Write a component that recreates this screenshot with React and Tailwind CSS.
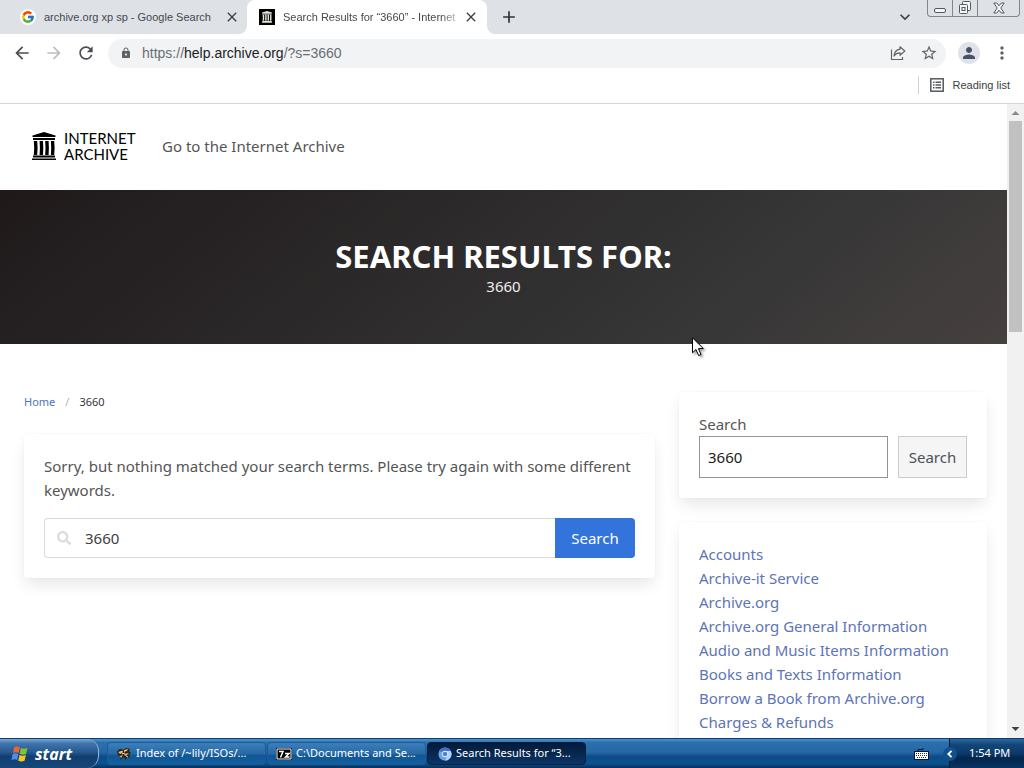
import React from 'react';
import { FcGoogle } from 'react-icons/fc';
import { FaSearch } from 'react-icons/fa';
import {
  MdAdd,
  MdArrowBack,
  MdArrowForward,
  MdClose,
  MdExpandMore,
  MdLock,
  MdMoreVert,
  MdPerson,
  MdRefresh,
  MdStarBorder,
} from 'react-icons/md';

const topics = [
  'Accounts',
  'Archive-it Service',
  'Archive.org',
  'Archive.org General Information',
  'Audio and Music Items Information',
  'Books and Texts Information',
  'Borrow a Book from Archive.org',
  'Charges & Refunds',
];

const cardClass =
  'rounded bg-white p-5 shadow-[0_8px_16px_-2px_rgba(10,10,10,0.1),0_0_0_1px_rgba(10,10,10,0.01)]';

function Temple({ className }) {
  return (
    <svg viewBox="0 0 24 28" className={className} fill="currentColor" aria-hidden="true">
      <path d="M12 0 23.5 3.4V5H.5V3.4ZM1 6h22v2H1ZM0 26.4h24V28H0ZM1 23.6h22v1.8H1Z" />
      <path d="M1.8 9h3.4l.4 7-.4 7H1.8l.4-7ZM7.6 9H11l.3 7-.3 7H7.6l.3-7ZM13.2 9h3.4l.3 7-.3 7h-3.4l.3-7ZM18.9 9h3.3l.4 7-.4 7h-3.3l.3-7Z" />
    </svg>
  );
}

function ShareIcon() {
  return (
    <svg viewBox="0 0 16 16" className="size-4" fill="none" stroke="#5f6368" strokeWidth="1.2" aria-hidden="true">
      <path d="M1.5 4.5v10h11V12" />
      <path d="M10 1.8 14.8 6 10 10.2V7.8C7.3 7.8 5.4 8.8 4 11c.4-3.8 2.5-6.2 6-6.8Z" strokeLinejoin="round" />
    </svg>
  );
}

function ReadingListIcon() {
  return (
    <svg viewBox="0 0 14 14" className="mr-[9px] size-[14px]" fill="none" stroke="#55595e" strokeWidth="1.500" aria-hidden="true">
      <rect x=".8" y=".8" width="12.400" height="12.400" />
      <path d="M3 4.200h1.500M3 7h1.500M3 9.800h1.500M5.500 4.200H11M5.500 7H11M5.500 9.800H11" />
    </svg>
  );
}

function WindowButtons() {
  const stroke = { fill: '#f4f6f8', stroke: '#55585d', strokeWidth: 1 };
  return (
    <div className="flex h-[17px] w-[93px] self-start overflow-hidden rounded-b border border-t-0 border-[#82868c]">
      <button aria-label="Minimize" className="flex w-6 items-end justify-center pb-[3px]">
        <svg viewBox="0 0 13 5" className="h-[5px] w-[13px]" {...stroke} aria-hidden="true">
          <rect x=".5" y=".5" width="11" height="4" rx="1.5" />
        </svg>
      </button>
      <button aria-label="Restore" className="flex w-[26px] items-center justify-center border-x border-[#82868c]">
        <svg viewBox="0 0 14 14" className="size-[14px]" {...stroke} aria-hidden="true">
          <rect x="4.5" y=".5" width="8" height="9" rx="1" />
          <rect x="1.5" y="3.5" width="8" height="9" rx="1" />
          <rect x="4" y="6.5" width="3" height="3" />
        </svg>
      </button>
      <button aria-label="Close" className="flex flex-1 items-center justify-center">
        <svg viewBox="0 0 12 12" className="size-3" {...stroke} aria-hidden="true">
          <path d="M.8 1h3L6 3.8 8.2 1h3L7.8 6l3.4 5h-3L6 8.2 3.8 11h-3l3.4-5Z" />
        </svg>
      </button>
    </div>
  );
}

function TabStrip() {
  return (
    <div className="flex h-[34px] shrink-0 bg-[#dee1e6] text-[11px] text-[#45494d]">
      <div className="flex w-[247px] items-center pl-5 pr-[7px]">
        <FcGoogle className="size-4 shrink-0 rounded-full bg-white p-px" />
        <span className="ml-2 flex-1 whitespace-nowrap">archive.org xp sp - Google Search</span>
        <button aria-label="Close tab">
          <MdClose className="size-4 text-[#3c4043]" />
        </button>
      </div>
      <div className="relative flex w-60 items-center rounded-t-lg bg-white pl-3 pr-2">
        <svg viewBox="0 0 8 8" className="absolute bottom-0 -left-2 size-2" aria-hidden="true">
          <path d="M8 0v8H0a8 8 0 0 0 8-8Z" fill="#fff" />
        </svg>
        <svg viewBox="0 0 8 8" className="absolute bottom-0 -right-2 size-2" aria-hidden="true">
          <path d="M0 0v8h8a8 8 0 0 1-8-8Z" fill="#fff" />
        </svg>
        <span className="flex size-4 shrink-0 items-center justify-center bg-black text-[#e6e2da]">
          <Temple className="h-3 w-3" />
        </span>
        <span className="ml-2 flex-1 whitespace-nowrap [mask-image:linear-gradient(to_right,#000_88%,transparent)]">
          Search Results for “3660” - Internet
        </span>
        <button aria-label="Close tab">
          <MdClose className="size-4 text-[#3c4043]" />
        </button>
      </div>
      <button aria-label="New tab" className="ml-3">
        <MdAdd className="size-5 text-[#2f3236]" />
      </button>
      <button aria-label="Search tabs" className="ml-auto mr-3">
        <MdExpandMore className="size-5 text-[#3c4043]" />
      </button>
      <WindowButtons />
      <span className="w-1" />
    </div>
  );
}

function Toolbar() {
  return (
    <div className="flex h-[38px] shrink-0 items-center bg-white px-3 text-[#5f6368]">
      <button aria-label="Back">
        <MdArrowBack className="size-5 text-[#4a4d51]" />
      </button>
      <button aria-label="Forward" className="ml-3">
        <MdArrowForward className="size-5 text-[#bcbec1]" />
      </button>
      <button aria-label="Reload" className="ml-3">
        <MdRefresh className="size-5 text-[#4a4d51]" />
      </button>
      <div className="ml-3 flex h-[29px] flex-1 items-center rounded-full bg-[#f1f3f4] pl-3 pr-2">
        <MdLock className="size-3" />
        <p className="ml-[10px] flex-1 text-sm text-[#6a6e73]">
          https://<span className="text-[#202124]">help.archive.org</span>/?s=3660
        </p>
        <button aria-label="Share">
          <ShareIcon />
        </button>
        <button aria-label="Bookmark this page" className="ml-[14px]">
          <MdStarBorder className="size-[18px]" />
        </button>
      </div>
      <button
        aria-label="Profile"
        className="ml-3 flex size-[22px] items-center justify-center rounded-full bg-[#dfe2ea]"
      >
        <MdPerson className="size-[18px] text-[#4b5265]" />
      </button>
      <button aria-label="Menu" className="ml-3">
        <MdMoreVert className="size-5" />
      </button>
    </div>
  );
}

function BookmarksBar() {
  return (
    <div className="flex h-8 shrink-0 items-start justify-end border-b border-[#d5d7da] bg-white pr-[14px] text-[11px] text-[#3c4043]">
      <button className="mt-1 flex h-[18px] items-center border-l border-[#cfd2d6] pl-[11px]">
        <ReadingListIcon />
        Reading list
      </button>
    </div>
  );
}

function SiteHeader() {
  return (
    <header className="flex h-[86px] items-center px-8 pb-[2px]">
      <a href="#home" className="flex w-[107px] items-center gap-2 text-black">
        <Temple className="h-7 w-6 shrink-0" />
        <span className="font-[Lato] text-[15px] leading-4">
          INTERNET
          <br />
          ARCHIVE
        </span>
      </a>
      <a href="#archive" className="ml-[23px] text-[#555]">
        Go to the Internet Archive
      </a>
    </header>
  );
}

function Hero() {
  return (
    <section className="bg-[linear-gradient(141deg,#1f191a_0%,#363636_71%,#46403f_100%)] px-6 py-12 text-center text-white">
      <h1 className="text-[31px] leading-9 font-bold">SEARCH RESULTS FOR:</h1>
      <p className="h-[22px] leading-6 text-[#ededed]">3660</p>
    </section>
  );
}

function Results() {
  return (
    <main className="min-w-0 flex-1">
      <nav aria-label="Breadcrumb" className="mb-[22px] flex text-[11px] leading-5">
        <a href="#home" className="text-[#4a74c4]">
          Home
        </a>
        <span className="mx-[10px] text-[#b5b5b5]">/</span>
        <span className="text-[#363636]">3660</span>
      </nav>
      <div className={cardClass}>
        <p className="mb-4 leading-6">
          Sorry, but nothing matched your search terms. Please try again with some different keywords.
        </p>
        <form className="flex h-10">
          <label className="flex flex-1 items-center rounded-l border border-r-0 border-[#dbdbdb] pl-3 text-[#404040]">
            <FaSearch className="size-[14px] shrink-0 text-[#dbdbdb]" />
            <input
              type="search"
              aria-label="Search the help center"
              defaultValue="3660"
              className="ml-[14px] w-full min-w-0 outline-none"
            />
          </label>
          <button type="button" className="w-20 rounded-r bg-[#3273dc] text-white">
            Search
          </button>
        </form>
      </div>
    </main>
  );
}

function Sidebar() {
  return (
    <aside className="flex w-[308px] shrink-0 flex-col gap-6">
      <form className={cardClass}>
        <label htmlFor="sidebar-search" className="block leading-6">
          Search
        </label>
        <div className="flex h-[42px] gap-[10px]">
          <input
            id="sidebar-search"
            type="search"
            defaultValue="3660"
            className="min-w-0 flex-1 border border-[#949494] px-2 text-[#1a1a1a] outline-none"
          />
          <button type="button" className="w-[69px] border border-[#ccc] bg-[#f5f5f5] text-[#4c5155]">
            Search
          </button>
        </div>
      </form>
      <ul className={cardClass}>
        {topics.map((topic) => (
          <li key={topic} className="leading-6">
            <a href="#topic" className="text-[#5c74b8]">
              {topic}
            </a>
          </li>
        ))}
      </ul>
    </aside>
  );
}

function Scrollbar() {
  return (
    <div className="flex w-[17px] shrink-0 flex-col items-center bg-[#f1f1f1]">
      <svg viewBox="0 0 17 17" className="size-[17px]" aria-hidden="true">
        <path d="m4.5 11 4-4 4 4Z" fill="#8a8a8a" />
      </svg>
      <div className="h-[211px] w-[13px] bg-[#c1c1c1]" />
      <svg viewBox="0 0 17 17" className="mt-auto size-[17px]" aria-hidden="true">
        <path d="m4.5 6 4 4 4-4Z" fill="#404040" />
      </svg>
    </div>
  );
}

function WindowsFlag() {
  return (
    <svg viewBox="0 0 18 18" className="size-[18px]" aria-hidden="true">
      <path d="M3.200 2.200c2-1 3.800-1 5.600.1L7.600 8C5.800 7 4 7 2 8Z" fill="#ef6235" />
      <path d="M9.900 3c2 1 4 1 6.500 0l-1.300 5.900c-2.200 1-4.300 1-6.400-.1Z" fill="#7fc62e" />
      <path d="M1.700 9.100c2-1 3.800-1 5.700.1l-1.300 5.900c-1.800-1.100-3.600-1-5.700-.1Z" fill="#4e8fe8" />
      <path d="M8.500 10c2 1 4.100 1 6.400 0l-1.300 5.800c-2.300 1-4.400 1-6.400 0Z" fill="#f9c725" />
    </svg>
  );
}

function PawIcon() {
  return (
    <svg viewBox="0 0 16 16" className="size-4" aria-hidden="true">
      <path d="M1 6c1-3 4-4 6-2l3-2 4 1-1 2 2 2-2 2 1 3-3-1-1 3-2-3-4 3 1-4-3-1Z" fill="#2b2018" />
      <path d="m2 6 3-1 2 2-3 1ZM8 4l4-1-1 2-3 1ZM8 8l5-1-2 2-2 1ZM4 10l3-1-2 3Z" fill="#f0b75b" />
      <path d="m5 5 2 1M10 10l2 1M6 8l3-1" stroke="#fff" strokeWidth=".8" />
    </svg>
  );
}

function SevenZipIcon() {
  return (
    <svg viewBox="0 0 16 12" className="h-3 w-4" aria-hidden="true">
      <path d="M0 0h16v12H0Z" fill="#000" />
      <path d="M1 1h14v10H1Z" fill="#000" stroke="#fff" />
      <path d="M3 3.500h4L4.500 9.500M9 5.500h4L9.500 9H13.500" fill="none" stroke="#fff" strokeWidth="1.500" />
    </svg>
  );
}

function ChromiumIcon() {
  return (
    <svg viewBox="0 0 16 16" className="size-[14px]" aria-hidden="true">
      <circle cx="8" cy="8" r="7.500" fill="#6fa3ea" />
      <path d="M8 8 1.500 4.200A7.500 7.500 0 0 1 14.500 4.500H8Z" fill="#3f6fcb" />
      <path d="M8 4.500h6.500A7.500 7.500 0 0 1 8 15.500l3-5.800Z" fill="#b5d3fa" />
      <circle cx="8" cy="8" r="3.600" fill="#e8f1fd" />
      <circle cx="8" cy="8" r="2.700" fill="#4b83dc" />
    </svg>
  );
}

const tasks = [
  { label: 'Index of /~lily/ISOs/...', icon: <PawIcon /> },
  { label: 'C:\\Documents and Se...', icon: <SevenZipIcon /> },
  { label: 'Search Results for “3...', icon: <ChromiumIcon />, active: true },
];

function Taskbar() {
  return (
    <footer className="flex h-[30px] shrink-0 border-t border-[#0e3c6c] bg-[linear-gradient(#4e93cb_0%,#2a70ae_12%,#2768a5_45%,#0b4c89_60%,#0c528f_85%,#062f5c_100%)] font-['Noto_Sans'] text-[11px] text-white">
      <button className="mr-2 flex w-[99px] items-center gap-[6px] rounded-r-xl border-r border-[#8cb8dd] bg-[linear-gradient(#79a9d4_0%,#3f76ad_15%,#28588f_45%,#123e70_60%,#164779_100%)] pl-[11px] font-['Open_Sans'] text-base font-bold italic">
        <WindowsFlag />
        start
      </button>
      {tasks.map((task) => (
        <button
          key={task.label}
          className={
            task.active
              ? 'my-[3px] flex w-[159px] items-center gap-1 rounded-sm border border-[#061f3f] bg-[linear-gradient(#031a3a,#0b3566)] pl-[10px]'
              : 'my-[3px] mr-px flex w-[159px] items-center gap-1 rounded-sm border border-[#1b5c98] bg-[linear-gradient(#3b7fba_0%,#2869a6_50%,#0f5694_60%,#14609f_100%)] pl-2'
          }
        >
          {task.icon}
          {task.label}
        </button>
      ))}
      <div className="ml-auto flex items-center pr-5">
        <svg viewBox="0 0 15 12" className="h-3 w-[15px]" aria-hidden="true">
          <path d="M4 3V1.500h5V0" fill="none" stroke="#05172c" />
          <rect x=".5" y="3.500" width="14" height="8" fill="#fff" stroke="#05172c" />
          <path d="M2 5.500h11M2 7.500h11M3 9.500h9" stroke="#23303e" strokeDasharray="1 1" />
        </svg>
      </div>
      <div className="flex w-[75px] items-center border-l border-[#03182f] bg-[linear-gradient(#2c689f_0%,#124678_20%,#0c3a69_50%,#04264c_65%,#083363_100%)]">
        <button
          aria-label="Show hidden icons"
          className="-ml-[7px] flex size-[14px] items-center justify-center rounded-full bg-[#11508d]"
        >
          <svg viewBox="0 0 8 8" className="size-2" fill="none" stroke="#fff" strokeWidth="1.800" aria-hidden="true">
            <path d="M5.500.8 2.300 4l3.200 3.200" />
          </svg>
        </button>
        <time className="ml-3 whitespace-nowrap">1:54 PM</time>
      </div>
    </footer>
  );
}

function Cursor() {
  return (
    <svg viewBox="0 0 14 21" className="absolute top-[337px] left-[692px] h-[21px] w-[14px] drop-shadow-[2px_2px_1px_rgba(0,0,0,0.35)]" aria-hidden="true">
      <path d="M.5.800v15l3.500-3.300 2.600 6 2.400-1-2.600-5.900H11.300Z" fill="#fff" stroke="#000" />
    </svg>
  );
}

function App() {
  return (
    <div className="relative flex h-screen flex-col overflow-hidden bg-white font-['Liberation_Sans',sans-serif]">
      <TabStrip />
      <Toolbar />
      <BookmarksBar />
      <div className="flex min-h-0 flex-1">
        <div className="min-w-0 flex-1 overflow-hidden font-['Noto_Sans',sans-serif] text-[15px] text-[#555]">
          <SiteHeader />
          <Hero />
          <div className="flex gap-6 pt-12 pr-5 pl-6">
            <Results />
            <Sidebar />
          </div>
        </div>
        <Scrollbar />
      </div>
      <Taskbar />
      <Cursor />
    </div>
  );
}

export default App;
